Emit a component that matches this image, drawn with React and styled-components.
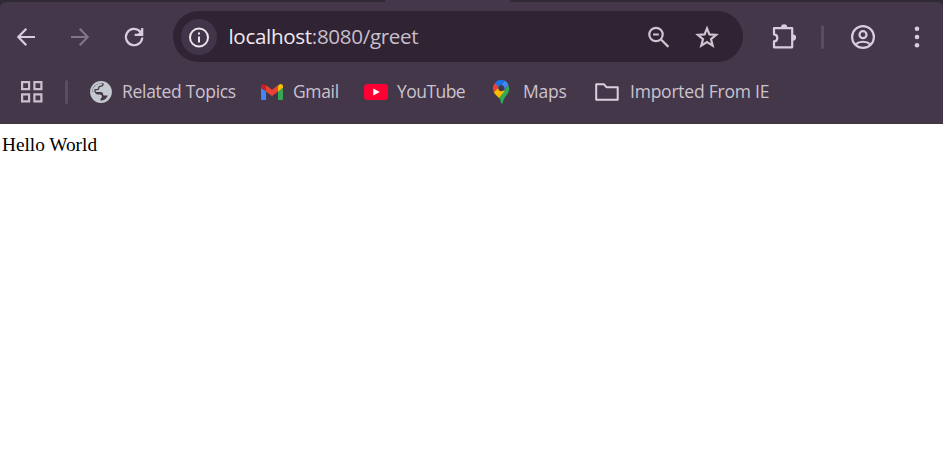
import React from "react";
import styled, { createGlobalStyle } from "styled-components";

const Global = createGlobalStyle`
  * { box-sizing: border-box; }
  html, body { margin: 0; background: #fff; overflow: hidden; }
`;

const Window = styled.div`
  display: flex;
  flex-direction: column;
  width: 943px;
  height: 466px;
  background: #fff;
  overflow: hidden;
`;

const TabStrip = styled.div`
  display: flex;
  justify-content: flex-start;
  height: 2px;
  padding-left: 385px;
  background: #312935;
`;

const ActiveTab = styled.div`
  width: 125px;
  height: 2px;
  background: #44374a;
`;

const ChromeBack = styled.header`
  height: 122px;
  background: #312935;
`;

const ChromeArea = styled.div`
  height: 122px;
  background: #44374a;
  border-radius: 6px 6px 0 0;
  border-bottom: 1px solid #3d3739;
`;

const Toolbar = styled.div`
  display: flex;
  align-items: center;
  height: 70px;
  padding-left: 12px;
`;

const IconButton = styled.button`
  display: flex;
  align-items: center;
  justify-content: center;
  flex: none;
  width: 28px;
  height: 28px;
  padding: 0;
  border: 0;
  background: none;
  margin-left: ${(p) => p.$gap || 0}px;
  color: ${(p) => p.$color || "#dacbe0"};
`;

const Omnibox = styled.div`
  display: flex;
  align-items: center;
  width: 570px;
  height: 51px;
  margin: 0 0 1px 25px;
  padding: 0 22px 0 8px;
  border-radius: 26px;
  background: #2f2334;
`;

const SiteInfo = styled.span`
  display: flex;
  align-items: center;
  justify-content: center;
  width: 36px;
  height: 36px;
  border-radius: 50%;
  background: #413549;
  color: #eee5ee;
`;

const Address = styled.div`
  flex: 1;
  margin: 0 0 2px 11.5px;
  font: 20.6px/30px "Open Sans", sans-serif;
  letter-spacing: -0.33px;
  color: #c9bfca;
  white-space: nowrap;
`;

const Host = styled.span`
  color: #f1e8f1;
`;

const Divider = styled.span`
  flex: none;
  width: 3px;
  height: 24px;
  margin-left: ${(p) => p.$gap}px;
  border-radius: 2px;
  background: #5b4c63;
`;

const BookmarkBar = styled.nav`
  display: flex;
  align-items: center;
  height: 40px;
  padding-left: 18px;
`;

const Bookmark = styled.a`
  display: flex;
  align-items: center;
  flex: none;
  width: ${(p) => p.$width}px;
  margin-left: ${(p) => p.$gap}px;
  color: #cbc3cd;
`;

const BookmarkIcon = styled.span`
  display: flex;
  flex: none;
  width: 24px;
  height: 24px;
`;

const Label = styled.span`
  margin: 0 0 2px ${(p) => p.$indent || 9}px;
  font: 17.5px/26px "Open Sans", sans-serif;
  letter-spacing: ${(p) => p.$spacing || 0}px;
  white-space: nowrap;
`;

const Page = styled.main`
  padding: 10px 0 0 2px;
  font: 19.3px/22px "Liberation Serif", serif;
  color: #000;
`;

const Svg = ({ size = 24, children }) => (
  <svg width={size} height={size} viewBox={`0 0 ${size} ${size}`} fill="none" stroke="currentColor" strokeWidth="2.2">
    {children}
  </svg>
);

const Back = () => <Svg size={28}><path d="M23 14H7M14.3 5.7 6.3 14l8 8.3" /></Svg>;
const Forward = () => <Svg size={28}><path d="M5 14h16M13.7 5.7l8 8.3-8 8.3" /></Svg>;
const Reload = () => (
  <Svg size={28}>
    <path d="M22.3 14.5A8.2 8.2 0 1 1 19.8 8.1L21.5 10" />
    <path d="M22.2 5v6.8h-7.5" />
    <path d="M22.2 6.5v5h-5z" fill="currentColor" stroke="none" />
  </Svg>
);
const Info = () => (
  <Svg size={22}>
    <circle cx="11" cy="11.5" r="9" strokeWidth="2" />
    <path d="M11 10.5v6M11 6.5v2.1" strokeWidth="2" />
  </Svg>
);
const ZoomOut = () => (
  <Svg size={28}>
    <circle cx="12" cy="11.5" r="6.7" />
    <path d="M9.1 11.5h5.8M16.8 16.3l7.6 7.6" />
  </Svg>
);
const Star = () => (
  <Svg size={28}>
    <path d="m14 5.4 2.4 6 6.7.5-5.1 4.3 1.7 6.5-5.7-3.6-5.7 3.6L10 16.2l-5.1-4.3 6.7-.5z" />
  </Svg>
);
const Puzzle = () => (
  <Svg size={28}>
    <path d="M4 5.2h18.2v19.1H4V18.4c2.2-.2 3.3-1.6 3.3-3.5S6.2 11.6 4 11.4z" strokeLinejoin="round" />
    <path d="M11 4.4a3.1 3.1 0 0 1 6.2 0zM23 11.5a3.1 3.1 0 0 1 0 6.2z" fill="currentColor" stroke="none" />
  </Svg>
);
const Profile = () => (
  <Svg size={28}>
    <circle cx="14" cy="14" r="10.9" />
    <circle cx="14" cy="11.7" r="3.5" />
    <path d="M6.5 21.3c4-3.4 11-3.4 15 0" />
  </Svg>
);
const More = () => (
  <Svg size={28}>
    <g fill="currentColor" stroke="none">
      <circle cx="14" cy="5.7" r="2.3" />
      <circle cx="14" cy="14" r="2.3" />
      <circle cx="14" cy="22.3" r="2.3" />
    </g>
  </Svg>
);
const Apps = () => (
  <Svg size={28}>
    <path d="M4.1 4.1h7v7h-7zM16.4 4.1h7v7h-7zM4.1 16.4h7v7h-7zM16.4 16.4h7v7h-7z" />
  </Svg>
);
const Globe = () => (
  <Svg>
    <circle cx="12" cy="12" r="10.9" fill="#c4c9cf" stroke="none" />
    <path d="M14.5 3.3c.5 2.2-.3 3.4-2.6 3.5-1 0-1.6.7-1.6 1.8-.1 1.1-1 1.6-2.2 1.7H6.7v1.7h5c1.7 0 2.4 1 2.4 2.3 0 1 .8 1.3 1.8 1.2l2.9-.1c-1 3.1-3.6 5.2-7.2 5.3v-2.3c1.3-.4 1.5-1.3 1.1-2.6-.4-1-1.3-1.2-2.5-1.2-2.5 0-3.9-.9-4.5-2.7H3.2c0-5.2 4.2-9.4 11.3-8.6z" fill="#44374a" stroke="none" />
    <path d="M3.4 11.8c0-3.7 2.8-7.3 7.3-8.3l2.6.2c.2 1.2-.4 1.8-1.7 1.9-1.5.1-2.4 1.2-2.5 2.5 0 .6-.4.9-1.2.9H5.5v2.8z" fill="#c4c9cf" stroke="none" />
  </Svg>
);
const Gmail = () => (
  <Svg>
    <g stroke="none">
      <path d="M1 8v10.4c0 .9.7 1.6 1.6 1.6H6v-9z" fill="#4285f4" />
      <path d="M18 11v9h3.4c.9 0 1.6-.7 1.6-1.6V8z" fill="#34a853" />
      <path d="M18 6v5.6l5-3.8V6.2c0-2-2.2-3-3.8-1.8z" fill="#fbbc04" />
      <path d="M1 6.2v1.6l5 3.8V6L4.8 4.4C3.2 3.2 1 4.2 1 6.2z" fill="#c5221f" />
      <path d="m6 5.3 6 4.5 6-4.5v6.3l-6 4.5-6-4.5z" fill="#ea4335" />
    </g>
  </Svg>
);
const YouTube = () => (
  <Svg>
    <rect x="0" y="4" width="24" height="16" rx="3.5" fill="#ff0033" stroke="none" />
    <path d="m9.3 8.5 6.5 3.5-6.5 3.5z" fill="#fff" stroke="none" />
  </Svg>
);
const Maps = () => (
  <Svg>
    <g stroke="none">
      <path d="M19.3 5c2.3 5.5-.4 8.5-3.1 12.1-1.2 1.6-1.9 3.3-2.4 5.7-.3 1.4-1.5 1.4-1.8 0-.4-2.1-.9-3.5-2.1-5.3z" fill="#34a853" />
      <path d="M4.8 12c.8 2.3 3.4 3.9 5.1 5.9l5.8-6.8-5.5-4.3z" fill="#fbbc04" />
      <path d="M6 2.9c-2.5 2.8-2.7 6.4-1.2 9.3l5.8-6z" fill="#ea4335" />
      <path d="M6 2.9C8.5-.2 12.5-.6 15.5.5L9.9 7.200z" fill="#1a73e8" />
      <path d="M15.5.5c1.8.7 3.1 2.2 3.8 4.5l-4.5 5.3-2.4-5.6z" fill="#4285f4" />
      <circle cx="12.3" cy="8.3" r="3" fill="#44374a" />
    </g>
  </Svg>
);
const Folder = () => (
  <Svg>
    <path d="M1.2 4.2h7.6l2.6 3h11.3v12.6H1.2z" stroke="#dbd0df" strokeWidth="2" strokeLinejoin="round" />
  </Svg>
);

const bookmarks = [
  { label: "Related Topics", icon: Globe, gap: 21, width: 149, spacing: -0.3 },
  { label: "Gmail", icon: Gmail, gap: 22, width: 80, spacing: -0.35 },
  { label: "YouTube", icon: YouTube, gap: 24, width: 104, spacing: -0.55 },
  { label: "Maps", icon: Maps, gap: 21, width: 80, spacing: -0.25, indent: 10 },
  { label: "Imported From IE", icon: Folder, gap: 26, width: 180, spacing: -0.23, indent: 11 },
];

export default function App() {
  return (
    <Window>
      <Global />
      <TabStrip><ActiveTab /></TabStrip>
      <ChromeBack>
        <ChromeArea>
          <Toolbar>
            <IconButton aria-label="Back"><Back /></IconButton>
            <IconButton aria-label="Forward" $gap={26} $color="#827388"><Forward /></IconButton>
            <IconButton aria-label="Reload" $gap={26}><Reload /></IconButton>
            <Omnibox>
              <SiteInfo><Info /></SiteInfo>
              <Address><Host>localhost</Host>:8080/greet</Address>
              <IconButton aria-label="Zoom" $color="#cec4cf"><ZoomOut /></IconButton>
              <IconButton aria-label="Bookmark" $gap={21} $color="#cec4cf"><Star /></IconButton>
            </Omnibox>
            <IconButton aria-label="Extensions" $gap={27}><Puzzle /></IconButton>
            <Divider $gap={23} />
            <IconButton aria-label="Profile" $gap={25}><Profile /></IconButton>
            <IconButton aria-label="More" $gap={26}><More /></IconButton>
          </Toolbar>
          <BookmarkBar>
            <IconButton aria-label="Apps" $color="#cbbfce"><Apps /></IconButton>
            <Divider $gap={19} />
            {bookmarks.map(({ label, icon: Icon, gap, width, spacing, indent }) => (
              <Bookmark key={label} $gap={gap} $width={width}>
                <BookmarkIcon><Icon /></BookmarkIcon>
                <Label $spacing={spacing} $indent={indent}>{label}</Label>
              </Bookmark>
            ))}
          </BookmarkBar>
        </ChromeArea>
      </ChromeBack>
      <Page>Hello World</Page>
    </Window>
  );
}
